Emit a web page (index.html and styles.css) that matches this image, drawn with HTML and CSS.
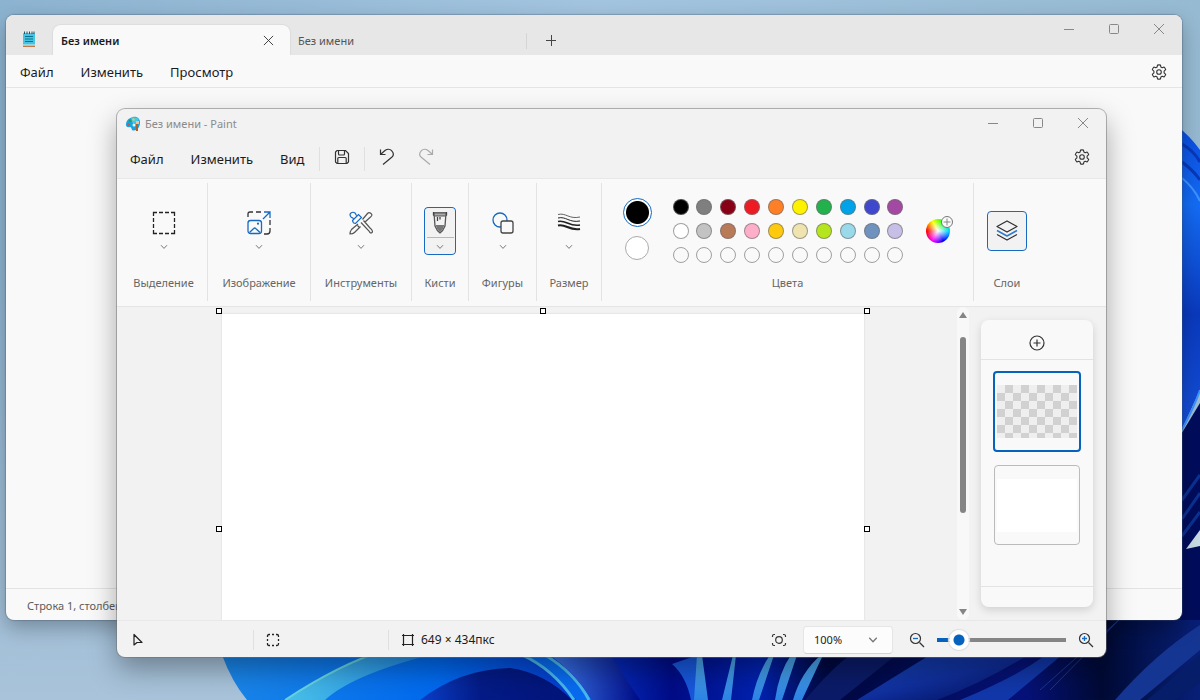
FILE: index.html
```html
<!DOCTYPE html>
<html lang="ru">
<head>
<meta charset="utf-8">
<title>Без имени - Paint</title>
<link rel="stylesheet" href="styles.css">
</head>
<body>
<svg width="0" height="0" class="defs" aria-hidden="true">
  <symbol id="chev" viewBox="0 0 8 6"><path d="M1 1.2 4 4.4 7 1.2" fill="none" stroke="#777"/></symbol>
  <symbol id="gear" viewBox="0 0 16 16"><g fill="none" stroke="#333" stroke-width="1.1" stroke-linejoin="round"><path d="M6.500 1.100Q8 .7 9.500 1.100L9.900 3.100 11.200 3.800 13.100 3.100Q14.200 4.200 14.700 5.700L13.100 7.100V8.900L14.700 10.300Q14.200 11.800 13.100 12.900L11.200 12.200 9.900 12.900 9.500 14.900Q8 15.300 6.500 14.900L6.100 12.900 4.800 12.200 2.900 12.900Q1.800 11.800 1.300 10.300L2.900 8.900V7.100L1.300 5.700Q1.800 4.200 2.900 3.100L4.800 3.800 6.100 3.100Z"/><circle cx="8" cy="8" r="2.300"/></g></symbol>
  <symbol id="min" viewBox="0 0 12 12"><path d="M1 6.500H11" stroke="#888"/></symbol>
  <symbol id="max" viewBox="0 0 12 12"><rect x="1.500" y="1.500" width="9" height="9" rx="1" fill="none" stroke="#888"/></symbol>
  <symbol id="close" viewBox="0 0 12 12"><path d="M1 1 11 11M11 1 1 11" stroke="currentColor" fill="none"/></symbol>
</svg>
<main class="desktop">
  <svg class="wallpaper" viewBox="0 0 1200 700" preserveAspectRatio="none" aria-hidden="true">
    <defs>
      <linearGradient id="sky" x2="1"><stop offset="0" stop-color="#8cb3d0"/><stop offset=".5" stop-color="#a3c4df"/><stop offset="1" stop-color="#96bad2"/></linearGradient>
      <linearGradient id="lowSky" x2="0" y2="1"><stop offset="0" stop-color="#a6c0d8" stop-opacity="0"/><stop offset="1" stop-color="#a8c3da"/></linearGradient>
      <linearGradient id="petal" x2="1"><stop offset="0" stop-color="#1a86e8"/><stop offset=".22" stop-color="#0069ee"/><stop offset=".38" stop-color="#0733c9"/><stop offset=".46" stop-color="#000c86"/><stop offset=".55" stop-color="#0022ae"/><stop offset=".62" stop-color="#00083f"/><stop offset=".82" stop-color="#06127a"/><stop offset=".9" stop-color="#000a34"/><stop offset="1" stop-color="#081f78"/></linearGradient>
      <linearGradient id="cyan" x2="1"><stop offset="0" stop-color="#49c1e8"/><stop offset="1" stop-color="#1a7fe6"/></linearGradient>
      <linearGradient id="right" x2="0" y2="1"><stop offset="0" stop-color="#0a4be0"/><stop offset=".25" stop-color="#146cf5"/><stop offset=".6" stop-color="#0a39bd"/><stop offset="1" stop-color="#1552dc"/></linearGradient>
      <linearGradient id="sweep" x2="1" y2="1"><stop offset="0" stop-color="#1747ba"/><stop offset=".5" stop-color="#102f9c"/><stop offset="1" stop-color="#000b4e"/></linearGradient>
      <linearGradient id="ribbon" x2="0" y2="1"><stop offset="0" stop-color="#4ba4e4"/><stop offset="1" stop-color="#2e84e6"/></linearGradient>
      <linearGradient id="hollow" x2="1"><stop offset="0" stop-color="#0a3fc8"/><stop offset=".4" stop-color="#041b87"/><stop offset="1" stop-color="#021479"/></linearGradient>
      <linearGradient id="fade" x2="1"><stop offset="0" stop-color="#3f7cf0"/><stop offset="1" stop-color="#000c86"/></linearGradient>
    </defs>
    <rect width="1200" height="700" fill="url(#sky)"/>
    <rect y="250" width="1200" height="450" fill="url(#lowSky)"/>
    <path d="M222 655Q232 682 247 700H1200V500H900L500 560Z" fill="url(#petal)"/>
    <path d="M285 700Q340 664 385 650H450Q355 672 325 700Z" fill="url(#cyan)"/>
    <path d="M285 700Q340 664 385 650" fill="none" stroke="#67d3df" stroke-width="2"/>
    <path d="M420 700Q460 669 510 668 545 673 572 700Z" fill="url(#hollow)"/>
    <path d="M520 655Q553 669 576 700H592Q572 668 541 655Z" fill="#086bf0"/>
    <path d="M522 655Q553 669 574 700M545 655Q575 673 589 700" fill="none" stroke="#49b8eb" stroke-width="3"/>
    <path d="M550 655H610L640 700H592Q576 674 550 655Z" fill="url(#fade)"/>
    <path d="M672 664 698 655 704 700H691Q686 676 672 664Z" fill="#1757db"/>
    <path d="M697 655 694 700H708L702 655M733 655 722 700H731L736 655" fill="url(#ribbon)"/>
    <path d="M770 655Q757 674 752 700H759L774 655M791 655Q779 672 775 700H782L797 655M821 655Q801 672 793 700H802L823 655" fill="url(#ribbon)"/>
    <path d="M805 700Q830 670 850 655H896L840 700Z" fill="#0b1b68"/>
    <path d="M857 700Q902 672 930 655H1028Q982 683 937 700Z" fill="url(#sweep)"/>
    <path d="M960 700Q1022 674 1045 655H1062L1008 700Z" fill="#1137a9"/>
    <path d="M1040 690 1130 610M1050 690 1120 619" stroke="#19368e" stroke-width="1"/>
    <path d="M1115 700Q1155 654 1200 625V650L1140 700Z" fill="#153592"/>
    <path d="M1147 700 1200 655V683L1174 700Z" fill="#061d69"/>
    <path d="M1177 126Q1190 136 1200 150V390L1177 440Z" fill="url(#right)"/>
    <path d="M1182 144Q1194 151 1200 162M1182 162Q1194 171 1200 180" stroke="#0838b9" stroke-width="3" fill="none"/>
    <path d="M1182 178Q1194 188 1200 201M1182 430Q1195 405 1200 390" stroke="#3e93ff" stroke-width="2" fill="none"/>
    <path d="M1180 436 1200 403V620H1180Z" fill="#000d5c"/>
    <path d="M1182 500 1200 475M1182 519 1200 493M1182 536 1200 512" stroke="#0b3292" stroke-width="3"/>
    <path d="M1186 549 1200 530V546Z" fill="#cadde6"/>
  </svg>

  <section class="window notepad" aria-label="Блокнот">
    <header class="tabbar">
      <svg class="appicon" width="14" height="18" viewBox="0 0 14 18"><rect x="1" y="3" width="12" height="14" rx="1" fill="#45c4e2"/><path d="M1 15.500H13V17H1Z" fill="#c67947"/><path d="M1 15H13" stroke="#d8edf0"/><path d="M3 6.500H11M3 9H11M3 11.500H11" stroke="#08718f"/><path d="M2.500 1.500V4M5 1.500V4M7.500 1.500V4M10 1.500V4M12 1.500V4" stroke="#235465"/></svg>
      <div class="tab active"><span>Без имени</span><button class="tabclose" aria-label="Закрыть вкладку"><svg width="11" height="11" viewBox="0 0 12 12"><use href="#close"/></svg></button></div>
      <button class="tab idle">Без имени</button>
      <button class="addtab" aria-label="Новая вкладка"><svg width="12" height="12" viewBox="0 0 12 12"><path d="M1 6.500H11M6.500 1V12" stroke="#444"/></svg></button>
      <div class="controls">
        <button aria-label="Свернуть"><svg width="12" height="12"><use href="#min"/></svg></button>
        <button aria-label="Развернуть"><svg width="12" height="12"><use href="#max"/></svg></button>
        <button aria-label="Закрыть"><svg width="12" height="12"><use href="#close"/></svg></button>
      </div>
    </header>
    <nav class="menubar">
      <button>Файл</button><button>Изменить</button><button>Просмотр</button>
      <button class="settings" aria-label="Параметры"><svg width="16" height="16"><use href="#gear"/></svg></button>
    </nav>
    <div class="document"></div>
    <footer class="notestatus">Строка 1, столбец 1</footer>
  </section>

  <section class="window paint" aria-label="Paint">
    <header class="titlebar">
      <svg width="16" height="16" viewBox="0 0 16 16"><path d="M8 1C12 0 15.500 3 15 7 15 11 12 14.500 9 14.500 6 15 7 11 5 11 2 12 .5 10 1 7.500 1.500 4 4 2 8 1Z" fill="#18a5df"/><path d="M6 2Q12 0 14 4L8 8Z" fill="#41c9ef"/><circle cx="3.500" cy="8.500" r="1.300" fill="#df4b3a"/><circle cx="5" cy="5" r="1.300" fill="#249b63"/><circle cx="8.500" cy="3.500" r="1.300" fill="#f5bf35"/><circle cx="9" cy="9" r="1.500" fill="#eefaff"/><path d="M12 8V15" stroke="#b35d28" stroke-width="2"/><path d="M10.500 8 11 5H14V8Z" fill="#efc29c"/></svg>
      <span>Без имени - Paint</span>
      <div class="controls">
        <button aria-label="Свернуть"><svg width="12" height="12"><use href="#min"/></svg></button>
        <button aria-label="Развернуть"><svg width="12" height="12"><use href="#max"/></svg></button>
        <button aria-label="Закрыть"><svg width="12" height="12"><use href="#close"/></svg></button>
      </div>
    </header>
    <nav class="menubar">
      <button>Файл</button><button>Изменить</button><button>Вид</button>
      <span class="quick"><button aria-label="Сохранить"><svg width="16" height="16" viewBox="0 0 16 16" fill="none" stroke="#333" stroke-width="1.200"><path d="M3 1.500H11.500L14.500 4.500V13L13 14.500H3L1.500 13V3Z"/><path d="M4.500 1.500V5Q4.500 6 5.500 6H9.500Q10.500 6 10.500 5V1.500M3.800 14V9.500Q3.800 8.500 4.800 8.500H11.200Q12.200 8.500 12.200 9.500V14"/></svg></button></span>
      <button class="history" aria-label="Отменить"><svg width="16" height="18" viewBox="0 0 16 18" fill="none" stroke="#333" stroke-width="1.200"><path d="M1.500 1.500V6.500H6.500M2 6 6 2.500C8 1 11 .8 12.800 2.800 14.800 5 14.500 7.500 13 9L4 16.500"/></svg></button>
      <button class="history" aria-label="Повторить"><svg width="16" height="18" viewBox="0 0 16 18" fill="none" stroke="#aaa" stroke-width="1.200"><path d="M14.500 1.500V6.500H9.500M14 6 10 2.500C8 1 5 .8 3.200 2.800 1.200 5 1.500 7.500 3 9L12 16.500"/></svg></button>
      <button class="settings" aria-label="Параметры"><svg width="16" height="16"><use href="#gear"/></svg></button>
    </nav>
    <div class="ribbon">
      <div class="group first"><button class="tool" aria-labelledby="g1"><svg width="24" height="24" viewBox="0 0 24 24"><path d="M1.500 5V1.500H5M7 1.500H11M13 1.500H17M19 1.500H22.500V5M22.500 7V11M22.500 13V17M22.500 19V22.500H19M17 22.500H13M11 22.500H7M5 22.500H1.500V19M1.500 17V13M1.500 11V7" fill="none" stroke="#222" stroke-width="1.300"/></svg><svg class="chev"><use href="#chev"/></svg></button><span class="label" id="g1">Выделение</span></div>
      <div class="group"><button class="tool" aria-labelledby="g2"><svg width="24" height="24" viewBox="0 0 24 24" fill="none" stroke-width="1.300"><path d="M1 6V3Q1 1 3 1H6M9 1H14M23 9V14M23 17V20Q23 23 20 23H17" stroke="#333"/><g stroke="#1769c2"><path d="M16 8 23 1M17 1H23V7"/><rect x="1" y="9.500" width="13.500" height="13" rx="2.500"/><path d="M2.500 21.500 6.700 17.500Q7.700 16.500 8.700 17.500L13 21.500"/></g><circle cx="11" cy="12.700" r="1.100" fill="#1769c2"/></svg><svg class="chev"><use href="#chev"/></svg></button><span class="label" id="g2">Изображение</span></div>
      <div class="group"><button class="tool" aria-labelledby="g3"><svg width="24" height="24" viewBox="0 0 24 24" fill="none" stroke="#555" stroke-width="1.200"><path d="M13.500 8.500 18.500 2.500Q20 .8 22 2.500T21.500 6L16 11M9 13 2.500 18.500Q1 20.500 1 23 4 23 5.500 21.500L11.500 15.500M8.500 14.500 10 16M12 11.500 20 20Q21.500 23 23 21.500T21 17L14.500 9.500"/><path d="M7.500 4.500 6 2Q4 .5 2 2T2 6L4.500 7.500M3.500 9.500 9.500 3.500 12.500 6.500 6.500 12.500Q4 12.500 3.500 9.500Z" stroke="#1769c2"/></svg><svg class="chev"><use href="#chev"/></svg></button><span class="label" id="g3">Инструменты</span></div>
      <div class="group"><button class="tool selected" aria-labelledby="g4"><svg width="24" height="24" viewBox="0 0 24 24"><path d="M6 2H18L17 15Q15 20 12 22 9 20 7 15Z" fill="#f3f3f3" stroke="#555" stroke-width="1.300"/><path d="M6 2H18V5H6Z" fill="#aaa" stroke="#555"/><path d="M7.500 14H16.500Q15 19 12 21.500 9 19 7.500 14Z" fill="#777"/><path d="M5.500 1V4.500M18.500 1V4.500M9.500 6V10M12 6V8.500" stroke="#444" stroke-width="1.300"/></svg><svg class="chev"><use href="#chev"/></svg></button><span class="label" id="g4">Кисти</span></div>
      <div class="group"><button class="tool" aria-labelledby="g5"><svg width="24" height="24" viewBox="0 0 24 24" stroke-width="1.300"><circle cx="9" cy="9" r="7" fill="none" stroke="#1769c2"/><rect x="10" y="10" width="12" height="12" rx="2" fill="#f9f9f9" stroke="#444"/></svg><svg class="chev"><use href="#chev"/></svg></button><span class="label" id="g5">Фигуры</span></div>
      <div class="group"><button class="tool" aria-labelledby="g6"><svg width="24" height="24" viewBox="0 0 24 24" fill="none" stroke="#222"><path d="M1 3.500C9 1.500 12 8.500 23 6" stroke-width=".7"/><path d="M1 7C9 5 12 12 23 10"/><path d="M1 10.500C9 8.500 12 16 23 14" stroke-width="1.700"/><path d="M1 14.500C9 12.500 12 20 23 18" stroke-width="2.200"/></svg><svg class="chev"><use href="#chev"/></svg></button><span class="label" id="g6">Размер</span></div>
      <div class="group colours">
        <div class="colourset">
          <div class="current"><button class="primary" aria-label="Цвет 1"></button><button class="secondary" aria-label="Цвет 2"></button></div>
          <div class="palette">
            <button class="swatch c0" aria-label="Чёрный"></button><button class="swatch c1" aria-label="Серый"></button><button class="swatch c2" aria-label="Тёмно-красный"></button><button class="swatch c3" aria-label="Красный"></button><button class="swatch c4" aria-label="Оранжевый"></button><button class="swatch c5" aria-label="Жёлтый"></button><button class="swatch c6" aria-label="Зелёный"></button><button class="swatch c7" aria-label="Голубой"></button><button class="swatch c8" aria-label="Индиго"></button><button class="swatch c9" aria-label="Лиловый"></button>
            <button class="swatch d0" aria-label="Белый"></button><button class="swatch d1" aria-label="Светло-серый"></button><button class="swatch d2" aria-label="Коричневый"></button><button class="swatch d3" aria-label="Розовый"></button><button class="swatch d4" aria-label="Золотой"></button><button class="swatch d5" aria-label="Бежевый"></button><button class="swatch d6" aria-label="Лайм"></button><button class="swatch d7" aria-label="Бирюзовый"></button><button class="swatch d8" aria-label="Сизый"></button><button class="swatch d9" aria-label="Лавандовый"></button>
            <button class="swatch" aria-label="Пусто"></button><button class="swatch" aria-label="Пусто"></button><button class="swatch" aria-label="Пусто"></button><button class="swatch" aria-label="Пусто"></button><button class="swatch" aria-label="Пусто"></button><button class="swatch" aria-label="Пусто"></button><button class="swatch" aria-label="Пусто"></button><button class="swatch" aria-label="Пусто"></button><button class="swatch" aria-label="Пусто"></button><button class="swatch" aria-label="Пусто"></button>
          </div>
          <button class="wheel" aria-label="Изменить цвета"><svg width="14" height="14" viewBox="0 0 14 14"><circle cx="7" cy="7" r="5.500" fill="#fafafa" stroke="#777"/><path d="M3.500 7H10.500M7 3.500V10.500" stroke="#888"/></svg></button>
        </div>
        <span class="label">Цвета</span>
      </div>
      <div class="group"><button class="layersbtn" aria-labelledby="g7"><svg width="24" height="24" viewBox="0 0 24 24" fill="none" stroke="#333" stroke-width="1.300" stroke-linejoin="round"><path d="M12 2 22 7.500 12 13 2 7.500Z"/><path d="M2 11.500 12 17 22 11.500" stroke="#2d7bcb" stroke-width="1.500"/><path d="M2 15.500 12 21 22 15.500"/></svg></button><span class="label" id="g7">Слои</span></div>
    </div>
    <div class="workspace">
      <div class="viewport">
        <div class="sheet"><i class="handle tl"></i><i class="handle tc"></i><i class="handle tr"></i><i class="handle ml"></i><i class="handle mr"></i></div>
        <div class="scroll"><svg width="10" height="8" viewBox="0 0 10 8"><path d="M5 1 9 7H1Z" fill="#858585"/></svg><div class="track"><div class="thumb"></div></div><svg width="10" height="8" viewBox="0 0 10 8"><path d="M5 7 9 1H1Z" fill="#858585"/></svg></div>
      </div>
      <aside class="layers">
        <button class="addlayer" aria-label="Добавить слой"><svg width="16" height="16" viewBox="0 0 16 16" fill="none" stroke="#333" stroke-width="1.200"><circle cx="8" cy="8" r="7"/><path d="M4.500 8H11.500M8 4.500V11.500"/></svg></button>
        <div class="layerlist"><button class="layer on" aria-label="Слой 2"><span class="checker"></span></button><button class="layer" aria-label="Слой 1"><span class="blank"></span></button></div>
        <div class="layerfoot"></div>
      </aside>
    </div>
    <footer class="status">
      <div class="cell pos"><svg width="12" height="14" viewBox="0 0 12 14"><path d="M2 1.500V12L5 9.500H10Z" fill="none" stroke="#222" stroke-width="1.200" stroke-linejoin="round"/></svg></div>
      <div class="cell sel"><svg width="14" height="14" viewBox="0 0 14 14"><path d="M1.500 4V3Q1.500 1.500 3 1.500H4M6 1.500H8M10 1.500H11Q12.500 1.500 12.500 3V4M12.500 6V8M12.500 10V11Q12.500 12.500 11 12.500H10M8 12.500H6M4 12.500H3Q1.500 12.500 1.500 11V10M1.500 8V6" fill="none" stroke="#222" stroke-width="1.300"/></svg></div>
      <div class="cell dim"><svg width="14" height="14" viewBox="0 0 14 14"><path d="M1 2.500H13M1 11.500H13M2.500 1V13M11.500 1V13" fill="none" stroke="#222" stroke-width="1.200"/></svg><span>649 × 434пкс</span></div>
      <button class="fit" aria-label="По размеру окна"><svg width="16" height="14" viewBox="0 0 16 14" fill="none" stroke="#333" stroke-width="1.200"><path d="M4 1.500H3Q1.500 1.500 1.500 3V4M12 1.500H13Q14.500 1.500 14.500 3V4M4 12.500H3Q1.500 12.500 1.500 11V10M12 12.500H13Q14.500 12.500 14.500 11V10"/><circle cx="8" cy="7" r="3.300"/></svg></button>
      <div class="zoomwrap"><select aria-label="Масштаб"><option>100%</option></select><svg width="10" height="8" viewBox="0 0 8 6"><use href="#chev"/></svg></div>
      <button class="zoomout" aria-label="Уменьшить"><svg width="16" height="16" viewBox="0 0 16 16" fill="none"><circle cx="6.500" cy="6.500" r="5" stroke="#333" stroke-width="1.200"/><path d="M10.500 10.500 15 15" stroke="#333" stroke-width="1.300"/><path d="M4 6.500H9" stroke="#1769c2" stroke-width="1.300"/></svg></button>
      <input class="zoom" type="range" min="0" max="100" value="11" aria-label="Ползунок масштаба">
      <button class="zoomin" aria-label="Увеличить"><svg width="16" height="16" viewBox="0 0 16 16" fill="none"><circle cx="6.500" cy="6.500" r="5" stroke="#333" stroke-width="1.200"/><path d="M10.500 10.500 15 15" stroke="#333" stroke-width="1.300"/><path d="M4 6.500H9M6.500 4V9" stroke="#1769c2" stroke-width="1.300"/></svg></button>
    </footer>
  </section>
</main>
</body>
</html>
```
FILE: styles.css
```css
* { box-sizing: border-box; }
body { margin: 0; font: 12px/16px "Noto Sans", "Open Sans", sans-serif; color: #1b1b1b; }
button { font: inherit; color: inherit; background: none; border: 0; padding: 0; margin: 0; }
svg { display: block; flex: none; }
.defs { position: absolute; }
.desktop { position: relative; height: 100vh; overflow: hidden; }
.wallpaper { position: absolute; inset: 0; width: 100%; height: 100%; }
.window { position: absolute; display: flex; flex-direction: column; border-radius: 8px; overflow: hidden; }
.notepad { inset: 15px 18px 80px 6px; background: #f9f9f9; box-shadow: 0 0 1px 1px rgba(70, 90, 110, .35), 0 8px 20px rgba(0, 0, 0, .28); }
.paint { inset: 109px 94px 43px 117px; background: #f2f2f2; box-shadow: 0 0 0 1px rgba(110, 110, 110, .5), 0 12px 28px rgba(0, 0, 0, .34); }

.controls { display: flex; align-self: flex-start; margin: 0 1px 0 auto; color: #888; }
.controls button { width: 45px; height: 28px; display: grid; place-items: center; }

.tabbar { display: flex; height: 40px; background: #e7e7e7; align-items: flex-end; }
.appicon { margin: 0 16px 7px; }
.tab { height: 30px; width: 237px; font-size: 11px; text-align: left; padding: 1px 8px 0; }
.tab.active { display: flex; align-items: center; justify-content: space-between; margin-left: 1px; padding-right: 9px; font-weight: 600; background: #f9f9f9; border-radius: 8px 8px 0 0; box-shadow: 0 0 1px 1px #dcdcdc; clip-path: inset(-2px -2px 0 -2px); }
.tabclose { width: 26px; height: 24px; display: grid; place-items: center; color: #333; }
.tab.idle { color: #555; background: linear-gradient(#d5d5d5, #d5d5d5) right 8px / 1px 16px no-repeat; }
.addtab { width: 48px; height: 30px; display: grid; place-items: center; }

.menubar { display: flex; align-items: center; font-size: 13px; line-height: 18px; }
.notepad .menubar { height: 33px; padding: 1px 15px 0 14px; gap: 27px; border-bottom: 1px solid #e5e5e5; }
.menubar .settings { margin-left: auto; }
.document { flex: 1; }
.notestatus { height: 32px; padding: 8px 21px; font-size: 11px; line-height: 18px; color: #5c5c5c; border-top: 1px solid #e3e3e3; }

.titlebar { display: flex; align-items: center; height: 30px; padding-left: 8px; gap: 4px; font-size: 11px; color: #8b8b8b; }
.paint .menubar { height: 40px; padding: 0 16px 0 13px; gap: 27px; border-bottom: 1px solid #e8e8e8; }
.paint .menubar svg { margin-bottom: 3px; }
.quick { display: grid; place-items: center; width: 46px; height: 24px; margin: 0 -13px; border: solid #e0e0e0; border-width: 0 1px; }
.history { margin-right: -4px; }

.ribbon { display: grid; grid-template-columns: 91px 103px 101px 57px 68px 65px 1fr 66px; padding: 4px 66px 5px 0; background: #f9f9f9; border-bottom: 1px solid #e5e5e5; }
.group { display: flex; flex-direction: column; align-items: center; justify-content: space-between; height: 118px; padding: 24px 0 10px; border-right: 1px solid #e3e3e3; }
.group.first { padding-left: 3px; }
.group:last-child { border: 0; padding-top: 28px; }
.tool { display: flex; flex-direction: column; align-items: center; gap: 7px; width: 32px; height: 48px; padding-top: 4px; border-radius: 4px; }
.chev { width: 8px; height: 6px; margin-top: 2px; }
.selected { background: linear-gradient(#b8b8b8, #b8b8b8) center 30px / 27px 1px no-repeat #f2f2f2; box-shadow: inset 0 0 0 1px #1769c2; }
.label { font-size: 11px; color: #666; white-space: nowrap; }
.group.colours { padding-top: 16px; }
.colourset { display: flex; align-items: center; }
.current { display: flex; flex-direction: column; align-items: center; align-self: flex-start; gap: 9px; margin: -1px 21px 0 0; }
.primary { width: 29px; height: 29px; border-radius: 50%; background: radial-gradient(circle, #000 11px, #fff 12px); border: 1px solid #1769c2; }
.secondary { width: 24px; height: 24px; border-radius: 50%; background: #fff; border: 1px solid #aaa; }
.palette { display: grid; grid-template-columns: repeat(10, 16px); justify-content: space-between; row-gap: 8px; width: 231px; }
.swatch { width: 16px; height: 16px; border: 1px solid rgba(110, 110, 110, .65); border-radius: 50%; }
.c0 { background: #000; } .c1 { background: #7f7f7f; } .c2 { background: #880015; } .c3 { background: #ed1c24; } .c4 { background: #ff7f27; }
.c5 { background: #fff200; } .c6 { background: #22b14c; } .c7 { background: #00a2e8; } .c8 { background: #3f48cc; } .c9 { background: #a349a4; }
.d0 { background: #fff; } .d1 { background: #c3c3c3; } .d2 { background: #b97a57; } .d3 { background: #ffaec9; } .d4 { background: #ffc90e; }
.d5 { background: #efe4b0; } .d6 { background: #b5e61d; } .d7 { background: #99d9ea; } .d8 { background: #7092be; } .d9 { background: #c8bfe7; }
.wheel { position: relative; width: 24px; height: 24px; margin: 0 3px 0 22px; border-radius: 50%; background: radial-gradient(circle, #fff, transparent 65%), conic-gradient(from 90deg, #00d9ff, #00f, #f0f, #f00, #ff0, #0f0, #00d9ff); }
.wheel svg { position: absolute; right: -4px; top: -4px; }
.layersbtn { width: 40px; height: 40px; display: grid; place-items: center; border: 1px solid #1769c2; border-radius: 4px; background: #f2f2f2; }

.workspace { flex: 1; min-height: 0; display: flex; }
.viewport { position: relative; flex: 1; overflow: hidden; display: flex; justify-content: center; padding-top: 7px; }
.sheet { position: relative; flex: none; width: 642px; height: 430px; background: #fff; box-shadow: 0 0 1px 1px #e8e8e8; }
.handle { position: absolute; width: 6px; height: 6px; background: #fff; border: 1px solid #000; }
.tl { left: -6px; top: -6px; } .tc { left: calc(50% - 3px); top: -6px; } .tr { right: -6px; top: -6px; }
.ml { left: -6px; top: calc(50% - 3px); } .mr { right: -6px; top: calc(50% - 3px); }
.scroll { position: absolute; right: 0; top: 0; bottom: 0; width: 12px; display: flex; flex-direction: column; align-items: center; padding: 4px 0; background: #f8f8f8; border-radius: 6px; }
.track { flex: 1; padding-top: 18px; }
.thumb { width: 6px; height: 65%; border-radius: 3px; background: #858585; }
.layers { display: flex; flex-direction: column; width: 112px; margin: 13px 13px 13px 12px; border-radius: 8px; background: #f9f9f9; box-shadow: 0 3px 8px rgba(0, 0, 0, .14); }
.addlayer { display: grid; place-items: center; padding-top: 7px; height: 40px; border-bottom: 1px solid #e3e3e3; }
.layerlist { flex: 1; display: flex; flex-direction: column; align-items: center; gap: 13px; padding-top: 11px; }
.layer { display: grid; place-items: center; width: 86px; height: 80px; border: 1px solid #bbb; border-radius: 4px; background: #f9f9f9; }
.layer.on { width: 88px; height: 81px; border: 2px solid #0563bd; }
.checker { width: 80px; height: 53px; background: repeating-conic-gradient(#d1d1d1 0 25%, #efefef 0 50%) 0 0 / 16px 16px; }
.blank { width: 80px; height: 53px; background: #fff; }
.layerfoot { height: 21px; border-top: 1px solid #e3e3e3; }

.status { display: flex; align-items: center; height: 37px; padding-top: 1px; border-top: 1px solid #e8e8e8; font-size: 12px; }
.cell { display: flex; align-items: center; height: 20px; gap: 6px; border-right: 1px solid #e0e0e0; }
.pos { width: 137px; padding-left: 15px; }
.sel { width: 135px; padding-left: 12px; }
.dim { padding-left: 12px; border: 0; }
.fit { margin-left: auto; }
.zoomwrap { position: relative; margin: 0 16px; }
.zoomwrap select { appearance: none; display: block; width: 90px; height: 28px; padding: 0 10px; font-size: 11px; font-family: inherit; color: #222; background: #fcfcfc; border: 1px solid #e5e5e5; border-bottom-color: #d3d3d3; border-radius: 4px; }
.zoomwrap svg { position: absolute; right: 15px; top: 10px; pointer-events: none; }
.zoom { appearance: none; width: 129px; height: 20px; margin: 0 12px; background: linear-gradient(90deg, #0563bd 0 14px, #858585 14px) center / 100% 4px no-repeat; border-radius: 2px; }
.zoom::-webkit-slider-thumb { appearance: none; width: 20px; height: 20px; border-radius: 50%; background: radial-gradient(circle, #0563bd 5px, #fff 6px); box-shadow: 0 0 1px 1px #dedede; }
.zoomin { margin-right: 12px; }
```
